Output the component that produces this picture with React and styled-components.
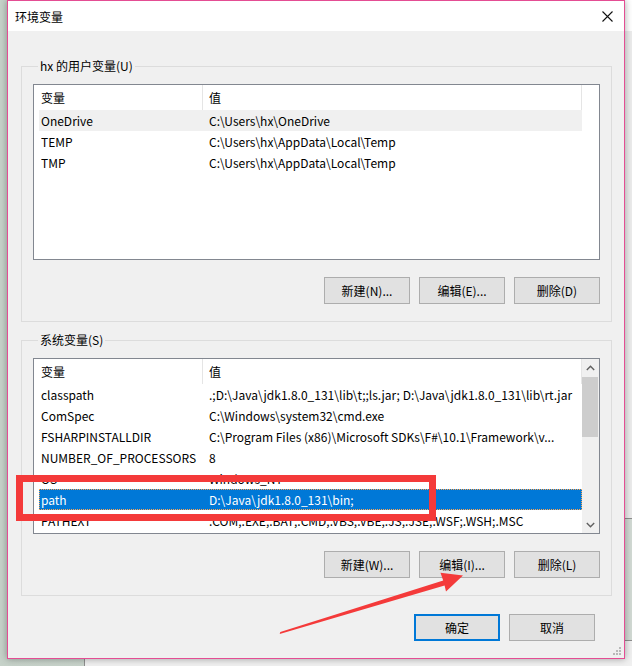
import styled, { createGlobalStyle } from "styled-components";

const UI_FONT = `"Noto Sans CJK SC", "Noto Sans", sans-serif`;

const GlobalStyle = createGlobalStyle`
  html, body {
    margin: 0;
    padding: 0;
    background: #cfd8d1;
  }
  * {
    box-sizing: border-box;
  }
`;

const Desktop = styled.div`
  position: relative;
  width: 632px;
  height: 666px;
  overflow: hidden;
  padding-left: 7px;
  background: linear-gradient(90deg, #c6d2c9 0%, #d2dad4 100%);
  font-family: ${UI_FONT};
  font-size: 12px;
  color: #000;
`;

const BackWindow = styled.div`
  position: absolute;
  left: ${({ $left }) => $left}px;
  top: ${({ $top }) => $top}px;
  width: ${({ $w }) => $w}px;
  height: ${({ $h }) => $h}px;
  background: ${({ $bg }) => $bg || "#f0f0f0"};
  border: 1px solid #8e8e8e;
  border-top: ${({ $white }) => ($white ? "32px solid #fff" : "1px solid #8e8e8e")};
`;

const Window = styled.div`
  position: relative;
  width: 618px;
  height: 659px;
  border: 1px solid #e44d93;
  background: #f0f0f0;
  display: flex;
  flex-direction: column;
  box-shadow: 0 0 7px rgba(0, 0, 0, 0.35);
`;

const TitleBar = styled.div`
  height: 30px;
  background: #fff;
  display: flex;
  align-items: center;
  justify-content: space-between;
  padding: 0 7px 0 7px;
  font-size: 12px;
`;

const CloseIcon = () => (
  <svg width="11" height="11" viewBox="0 0 11 11">
    <path d="M0.5 0.5 L10.5 10.5 M10.5 0.5 L0.5 10.5" stroke="#111" strokeWidth="1.1" />
  </svg>
);

const CloseBox = styled.div`
  width: 20px;
  display: flex;
  justify-content: center;
  padding-top: 1px;
`;

const Body = styled.div`
  flex: 1;
  display: flex;
  flex-direction: column;
  padding: 27px 12px 0 13px;
`;

const Group = styled.fieldset`
  margin: 0 0 ${({ $mb }) => $mb || 0}px 0;
  padding: 10px 11px 17px 11px;
  border: 1px solid #dcdcdc;
  min-inline-size: 0;
  flex-shrink: 0;
`;

const Legend = styled.legend`
  margin-left: 5px;
  padding: 0 2px;
  line-height: 16px;
  font-size: 12px;
`;

const ListView = styled.div`
  height: 176px;
  border: 1px solid #828790;
  background: #fff;
  display: flex;
  overflow: hidden;
`;

const ListMain = styled.div`
  width: 548px;
  display: flex;
  flex-direction: column;
`;

const Header = styled.div`
  display: flex;
  height: 25px;
  flex-shrink: 0;
`;

const HeaderCell = styled.div`
  width: ${({ $w }) => $w}px;
  border-right: 1px solid #e5e5e5;
  padding-left: ${({ $pl }) => $pl}px;
  display: flex;
  align-items: center;
`;

const Rows = styled.div`
  padding-left: 5px;
`;

const Row = styled.div`
  display: grid;
  grid-template-columns: 168px 1fr;
  height: 21px;
  align-items: center;
  padding-left: 2px;
  white-space: nowrap;
  overflow: hidden;
  background: ${({ $state }) =>
    $state === "selected" ? "#0078d7" : $state === "hover" ? "#f0f0f0" : "transparent"};
  color: ${({ $state }) => ($state === "selected" ? "#fff" : "#000")};
  outline: ${({ $state }) => ($state === "selected" ? "1px dotted #ffa552" : "none")};
  outline-offset: -1px;
`;

const Cell = styled.span`
  overflow: hidden;
  text-overflow: clip;
`;

const Gutter = styled.div`
  width: 17px;
  display: flex;
  flex-direction: column;
  background: ${({ $scroll }) => ($scroll ? "#f0f0f0" : "#fff")};
`;

const ArrowBtn = styled.div`
  height: 17px;
  display: flex;
  align-items: center;
  justify-content: center;
`;

const Track = styled.div`
  flex: 1;
  padding-top: 1px;
`;

const Thumb = styled.div`
  height: 60px;
  margin: 0 1px 0 0;
  background: #cdcdcd;
`;

const Chevron = ({ up }) => (
  <svg width="9" height="6" viewBox="0 0 9 6">
    <path
      d={up ? "M0.8 5 L4.5 1.3 L8.2 5" : "M0.8 1 L4.5 4.7 L8.2 1"}
      fill="none"
      stroke="#606060"
      strokeWidth="1.4"
    />
  </svg>
);

const ButtonRow = styled.div`
  display: flex;
  justify-content: flex-end;
  gap: 9px;
  margin-top: 17px;
`;

const Button = styled.button`
  width: 86px;
  height: 27px;
  padding: 0;
  background: #e1e1e1;
  border: ${({ $default }) => ($default ? "2px solid #0078d7" : "1px solid #adadad")};
  font-family: ${UI_FONT};
  font-size: 12px;
  color: #000;
`;

const DialogButtons = styled.div`
  display: flex;
  justify-content: flex-end;
  gap: 9px;
  margin-top: 18px;
  padding-right: 17px;
`;

const Grip = styled.svg`
  position: absolute;
  right: 2px;
  bottom: 2px;
`;

const RedBox = styled.div`
  position: absolute;
  left: 16px;
  top: 475px;
  width: 420px;
  height: 46px;
  border: 7px solid #f43a3a;
  pointer-events: none;
`;

const ArrowLayer = styled.svg`
  position: absolute;
  left: 0;
  top: 0;
  pointer-events: none;
`;

const userVars = [
  ["OneDrive", "C:\\Users\\hx\\OneDrive", "hover"],
  ["TEMP", "C:\\Users\\hx\\AppData\\Local\\Temp"],
  ["TMP", "C:\\Users\\hx\\AppData\\Local\\Temp"],
];

const sysVars = [
  ["classpath", ".;D:\\Java\\jdk1.8.0_131\\lib\\t;;ls.jar; D:\\Java\\jdk1.8.0_131\\lib\\rt.jar"],
  ["ComSpec", "C:\\Windows\\system32\\cmd.exe"],
  ["FSHARPINSTALLDIR", "C:\\Program Files (x86)\\Microsoft SDKs\\F#\\10.1\\Framework\\v..."],
  ["NUMBER_OF_PROCESSORS", "8"],
  ["OS", "Windows_NT"],
  ["path", "D:\\Java\\jdk1.8.0_131\\bin;", "selected"],
  ["PATHEXT", ".COM;.EXE;.BAT;.CMD;.VBS;.VBE;.JS;.JSE;.WSF;.WSH;.MSC"],
];

function VarList({ items, scroll }) {
  return (
    <ListView>
      <ListMain>
        <Header>
          <HeaderCell $w={169} $pl={7}>变量</HeaderCell>
          <HeaderCell $w={379} $pl={6}>值</HeaderCell>
        </Header>
        <Rows>
          {items.map(([name, value, state]) => (
            <Row key={name} $state={state}>
              <Cell>{name}</Cell>
              <Cell>{value}</Cell>
            </Row>
          ))}
        </Rows>
      </ListMain>
      <Gutter $scroll={scroll}>
        {scroll && (
          <>
            <ArrowBtn>
              <Chevron up />
            </ArrowBtn>
            <Track>
              <Thumb />
            </Track>
            <ArrowBtn>
              <Chevron />
            </ArrowBtn>
          </>
        )}
      </Gutter>
    </ListView>
  );
}

export default function App() {
  return (
    <Desktop>
      <GlobalStyle />
      <BackWindow $left={624} $top={-1} $w={20} $h={520} $bg="#ececec" $white />
      <BackWindow $left={84} $top={640} $w={560} $h={40} />
      <Window>
        <TitleBar>
          <span>环境变量</span>
          <CloseBox>
            <CloseIcon />
          </CloseBox>
        </TitleBar>
        <Body>
          <Group $mb={10}>
            <Legend>hx 的用户变量(U)</Legend>
            <VarList items={userVars} />
            <ButtonRow>
              <Button>新建(N)...</Button>
              <Button>编辑(E)...</Button>
              <Button>删除(D)</Button>
            </ButtonRow>
          </Group>
          <Group>
            <Legend>系统变量(S)</Legend>
            <VarList items={sysVars} scroll />
            <ButtonRow>
              <Button>新建(W)...</Button>
              <Button>编辑(I)...</Button>
              <Button>删除(L)</Button>
            </ButtonRow>
          </Group>
          <DialogButtons>
            <Button $default>确定</Button>
            <Button>取消</Button>
          </DialogButtons>
        </Body>
        <Grip width="10" height="10" viewBox="0 0 10 10">
          {[
            [7, 1],
            [7, 4],
            [4, 4],
            [7, 7],
            [4, 7],
            [1, 7],
          ].map(([x, y]) => (
            <rect key={`${x}-${y}`} x={x} y={y} width="2" height="2" fill="#b8b8b8" />
          ))}
        </Grip>
      </Window>
      <RedBox />
      <ArrowLayer width="632" height="666" viewBox="0 0 632 666">
        <polygon
          points="279.7,633.9 280.3,632.1 443.2,580.6 440.5,572.7 463,575.5 446,591.5 444.6,585.6"
          fill="#f43a3a"
        />
      </ArrowLayer>
    </Desktop>
  );
}
